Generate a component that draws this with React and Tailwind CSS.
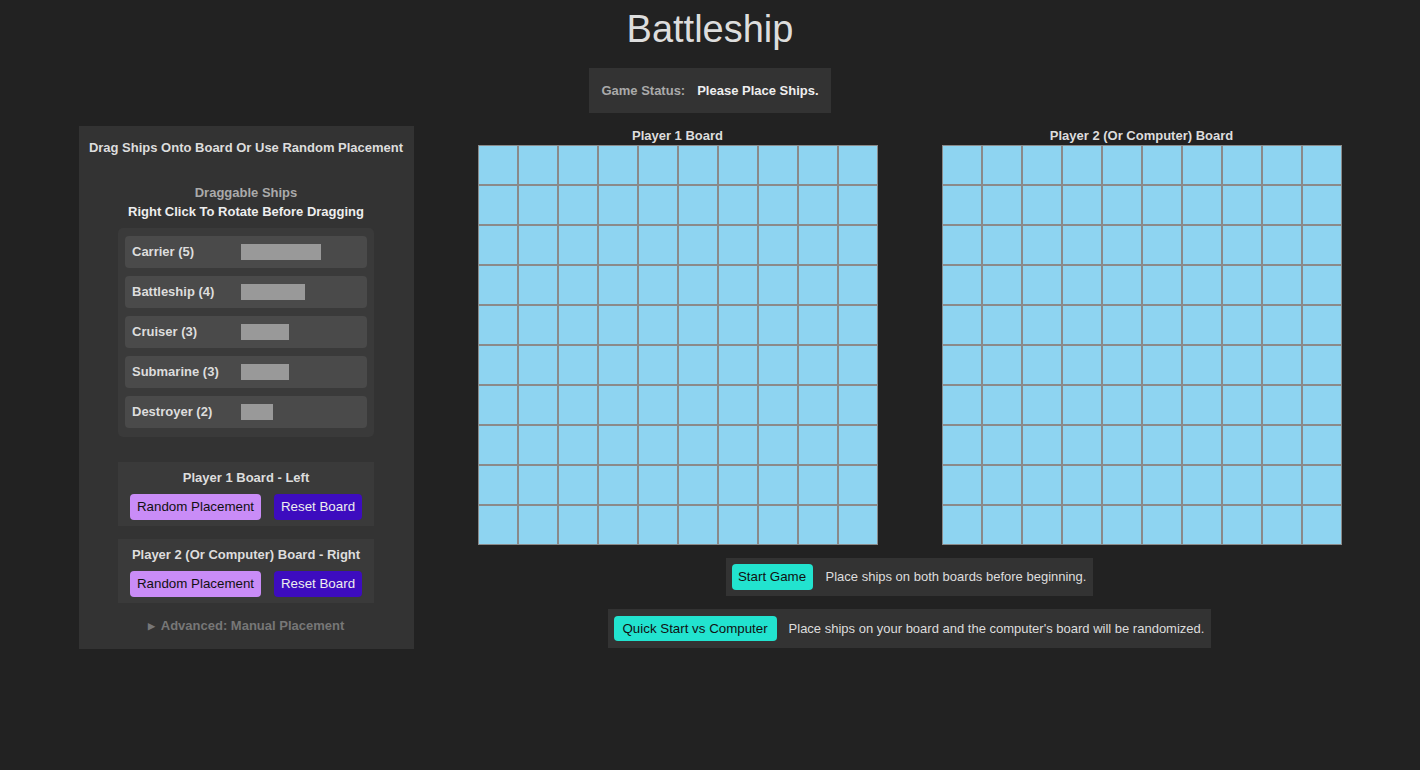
import React from 'react';

const ships = [
    { name: 'Carrier', size: 5 },
    { name: 'Battleship', size: 4 },
    { name: 'Cruiser', size: 3 },
    { name: 'Submarine', size: 3 },
    { name: 'Destroyer', size: 2 },
];

const shipBarWidths = {
    5: 'w-[80px]',
    4: 'w-[64px]',
    3: 'w-[48px]',
    2: 'w-[32px]',
};

function Board({ title }) {
    const cells = Array.from({ length: 100 });
    return (
        <div className="flex flex-col items-center">
            <div className="h-[19px] leading-[19px] text-[13px] font-bold text-[#ddd]">{title}</div>
            <div className="grid grid-cols-10 w-[400px] h-[400px]">
                {cells.map((_, i) => (
                    <div key={i} className="w-[40px] h-[40px] border border-[#8a8a8a] bg-[#8ed4f1]" />
                ))}
            </div>
        </div>
    );
}

function PlayerControls({ label }) {
    return (
        <div className="mx-auto w-[256px] bg-[#3a3a3a] pt-[7px] pb-[6px]">
            <div className="text-center text-[13px] font-bold leading-[18px] text-[#ddd]">{label}</div>
            <div className="mt-[7px] flex justify-center gap-[13px]">
                <button className="h-[26px] w-[131px] rounded-[4px] bg-[#c98cf7] text-[13.33px] text-[#111]">Random Placement</button>
                <button className="h-[26px] w-[88px] rounded-[4px] bg-[#3d0cbf] text-[13.33px] text-[#eee]">Reset Board</button>
            </div>
        </div>
    );
}

export default function App() {
    return (
        <div className="min-h-screen bg-[#222] font-['Liberation_Sans',Arial,sans-serif] text-[#ddd]">
            <h1 className="pt-[9px] text-center text-[38px] leading-[40px] text-[#ddd]">Battleship</h1>

            <div className="mt-[19px] flex justify-center">
                <div className="flex h-[45px] min-w-[240px] items-center justify-center gap-[12px] whitespace-nowrap bg-[#333] px-[12px] text-[13px] font-bold">
                    <span className="text-[#aaa]">Game Status:</span>
                    <span className="text-[#eee]">Please Place Ships.</span>
                </div>
            </div>

            <div className="mt-[13px] flex items-start justify-center gap-[64px]">
                {/* painel da esquerda */}
                <div className="w-[335px] bg-[#333] pt-[13px] pb-[14px]">
                    <div className="text-center text-[13px] font-bold leading-[18px] text-[#ddd]">
                        Drag Ships Onto Board Or Use Random Placement
                    </div>
                    <div className="mt-[26px] text-center text-[13px] font-bold leading-[19px]">
                        <div className="text-[#aaa]">Draggable Ships</div>
                        <div className="text-[#eee]">Right Click To Rotate Before Dragging</div>
                    </div>

                    <div className="mx-auto mt-[7px] flex w-[256px] flex-col gap-[8px] rounded-[5px] bg-[#3a3a3a] px-[7px] pt-[8px] pb-[9px]">
                        {ships.map(ship => (
                            <div key={ship.name} className="flex h-[32px] items-center rounded-[4px] bg-[#4a4a4a] pl-[7px]">
                                <span className="w-[109px] text-[13px] font-bold text-[#ddd]">{ship.name} ({ship.size})</span>
                                <span className={`h-[16px] bg-[#999] ${shipBarWidths[ship.size]}`} />
                            </div>
                        ))}
                    </div>

                    <div className="mt-[25px] flex flex-col gap-[13px]">
                        <PlayerControls label="Player 1 Board - Left" />
                        <PlayerControls label="Player 2 (Or Computer) Board - Right" />
                    </div>

                    <div className="mt-[14px] flex items-center justify-center gap-[6px] text-[13px] font-bold leading-[18px] text-[#777]">
                        <span className="text-[9px]">&#9654;</span>
                        <span>Advanced: Manual Placement</span>
                    </div>
                </div>

                {/* tabuleiros */}
                <div className="flex flex-col items-center">
                    <div className="flex gap-[64px]">
                        <Board title="Player 1 Board" />
                        <Board title="Player 2 (Or Computer) Board" />
                    </div>

                    <div className="mt-[13px] flex h-[38px] items-center gap-[13px] bg-[#333] pl-[6px] pr-[7px]">
                        <button className="h-[26px] w-[81px] rounded-[4px] bg-[#22e3cf] text-[13.33px] text-[#111]">Start Game</button>
                        <span className="text-[13px] text-[#ddd]">Place ships on both boards before beginning.</span>
                    </div>

                    <div className="mt-[13px] flex h-[39px] items-center gap-[12px] bg-[#333] pl-[6px] pr-[7px]">
                        <button className="h-[25px] w-[163px] rounded-[4px] bg-[#22e3cf] text-[13.33px] text-[#111]">Quick Start vs Computer</button>
                        <span className="text-[13px] text-[#ddd]">Place ships on your board and the computer's board will be randomized.</span>
                    </div>
                </div>
            </div>
        </div>
    );
}
